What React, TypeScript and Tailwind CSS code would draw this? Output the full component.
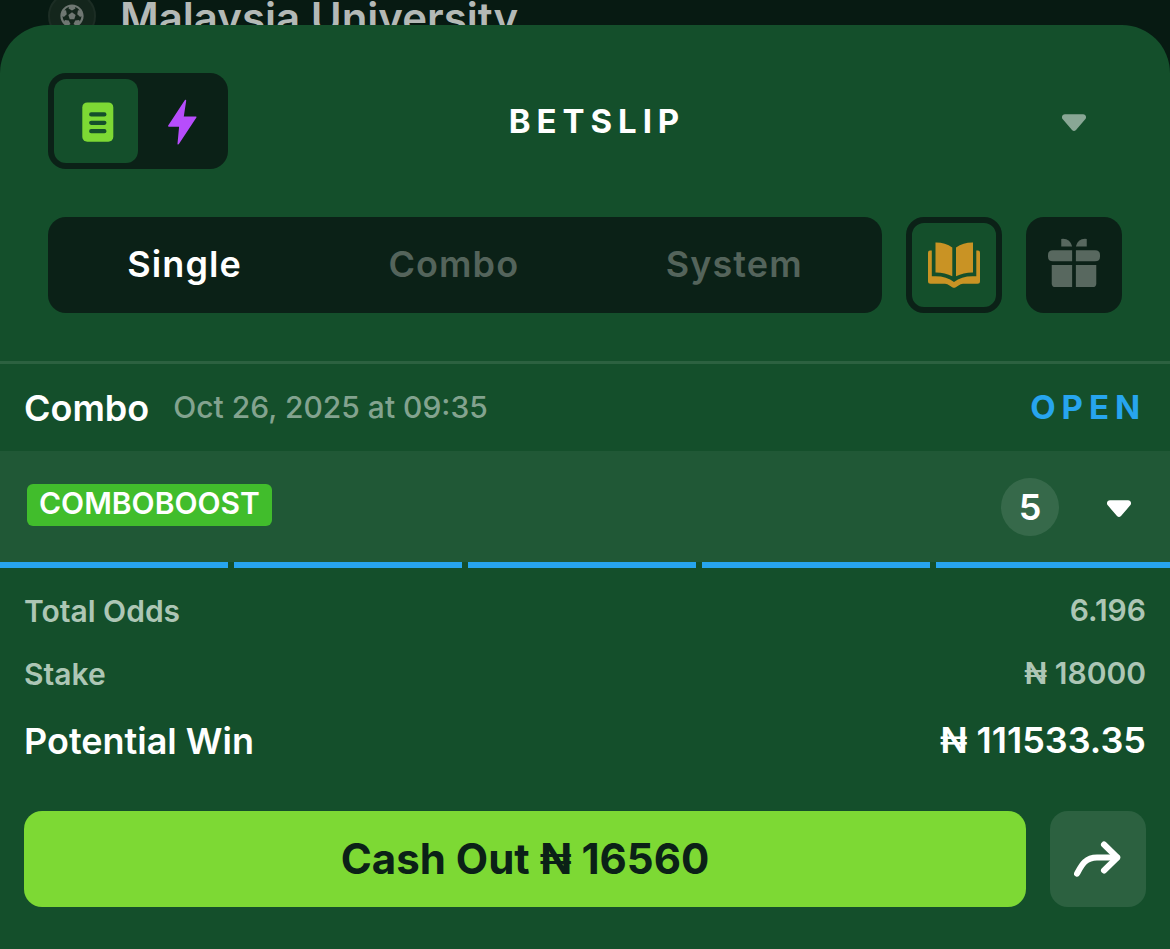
import { useState, type ReactNode } from "react";
import { FaFutbol } from "react-icons/fa";

function ListIcon() {
  return (
    <svg width="32" height="40" viewBox="0 0 32 40" aria-hidden="true">
      <rect x="0.3" y="0.4" width="31" height="39.4" rx="5" fill="#7dd934" />
      <path d="M9.2 12.4h13.2M9.2 20.8h13.2M9.2 29.2h13.2" stroke="#144f2b" strokeWidth="4.2" strokeLinecap="round" />
    </svg>
  );
}

function BoltIcon() {
  return (
    <svg width="30" height="46" viewBox="0 0 30 46" aria-hidden="true">
      <path
        d="M17.600 1.400 1.200 26.600c-.4.6 0 1.100.6 1.100h10.300l-1.600 17c-.1 1 .9 1.200 1.400.4L29.400 18.600c.4-.6 0-1.200-.6-1.200H16.800l2.400-15.600c.1-1-1.100-1.300-1.600-.4z"
        fill="#b74dfc"
      />
    </svg>
  );
}

function BookIcon() {
  return (
    <svg width="52" height="46" viewBox="0 0 52 46" fill="#c99324" aria-hidden="true">
      <path d="M7.500.6Q17 .4 24.300 5.600V34.200Q17 30.300 7.500 30.400z" />
      <path d="M45 .6Q35.500 .4 28 5.600V34.200Q35.500 30.300 45 30.400z" />
      <path d="M0 10.800Q0 8.600 2 8.600H3.800V34.300Q17.500 33.200 26 40Q34.500 33.200 48.300 34.300V8.600H50Q52 8.600 52 10.800V39.200Q52 41.700 49.500 41.700H35Q32.500 41.700 30.500 43.500L27.800 45.300Q26 46.300 24.200 45.300L21.500 43.500Q19.500 41.700 17 41.700H2.500Q0 41.700 0 39.200z" />
    </svg>
  );
}

function GiftIcon() {
  return (
    <svg width="52" height="50" viewBox="0 0 53 50" fill="#58685f" aria-hidden="true">
      <path d="M13.500.5Q22.500-.5 24.600 8.300H13.500z" />
      <path d="M39.500.5Q30.500-.5 28.400 8.300H39.500z" />
      <path d="M5 12H24.600V23.200H5Q0 23.200 0 18.600V16.600Q0 12 5 12z" />
      <path d="M28.400 12H48Q53 12 53 16.600V18.600Q53 23.200 48 23.200H28.400z" />
      <path d="M3.800 27H24.600V49.500H7.500Q3.800 49.500 3.800 45.800z" />
      <path d="M28.400 27H49.200V45.800Q49.200 49.500 45.500 49.500H28.400z" />
    </svg>
  );
}

function CaretIcon() {
  return (
    <svg width="24" height="18" viewBox="0 0 24 18" fill="currentColor" aria-hidden="true">
      <path d="M3 .3H21C24 .3 25 3.500 23 5.600L14 16Q12 18.200 10 16L1 5.600C-1 3.500 0 .3 3 .3z" />
    </svg>
  );
}

function ShareIcon() {
  return (
    <svg width="48" height="38" viewBox="0 0 48 38" fill="none" stroke="white" strokeWidth="6" strokeLinecap="round" strokeLinejoin="round" aria-hidden="true">
      <path d="M3 33.600C7.500 25.500 11 17.500 23 17.500H43" />
      <path d="M30 4.500 43.300 17.500 30 30.500" />
    </svg>
  );
}

function SummaryRow({ label, value, strong = false }: { label: string; value: ReactNode; strong?: boolean }) {
  return (
    <div
      className={
        strong
          ? "flex items-center justify-between text-4xl leading-[44px] font-semibold text-white"
          : "flex items-center justify-between text-3xl leading-9 font-semibold text-[#adc6b5]"
      }
    >
      <dt>{label}</dt>
      <dd className="pb-0.5">{value}</dd>
    </div>
  );
}

const betTypes = ["Single", "Combo", "System"];
const legs = [1, 2, 3, 4, 5];

export default function App() {
  const [betType, setBetType] = useState("Single");

  return (
    <div className="min-h-screen bg-[#071a12] font-['Inter',sans-serif]">
      <div className="flex h-[25px] items-start gap-6 overflow-hidden px-12">
        <div className="-mt-2 flex size-12 shrink-0 items-center justify-center rounded-full border-2 border-[#1c2d24] bg-[#14261c]">
          <FaFutbol className="size-6 text-[#6f7772]" />
        </div>
        <p className="-mt-2 text-[42px] leading-[52px] font-semibold whitespace-nowrap text-[#b4b9b6]">Malaysia University</p>
      </div>

      <main className="min-h-[calc(100vh-25px)] rounded-t-[48px] bg-[#144f2b] pt-12 text-white">
        <header className="px-12 pb-12">
          <div className="flex items-center">
            <div className="flex rounded-[18px] bg-[#0b2117] p-1.5">
              <button aria-label="Betslip" className="flex size-[84px] items-center justify-center rounded-xl bg-[#144f2b] pt-0.5 pl-1">
                <ListIcon />
              </button>
              <button aria-label="Quick bet" className="flex size-[84px] items-center justify-center rounded-xl pt-0.5 pl-1">
                <BoltIcon />
              </button>
            </div>
            <h1 className="flex-1 text-center text-[33px] leading-10 font-bold tracking-[0.18em]">BETSLIP</h1>
            <div className="flex w-[156px] justify-end">
              <button aria-label="Collapse" className="flex size-24 items-center justify-center pt-1 text-[#89a795]">
                <CaretIcon />
              </button>
            </div>
          </div>

          <div className="mt-12 flex gap-6">
            <div className="flex h-24 flex-1 rounded-[18px] bg-[#0b2117] p-1.5">
              {betTypes.map((type) => (
                <button
                  key={type}
                  onClick={() => setBetType(type)}
                  className={
                    type === betType
                      ? "flex-auto pb-0.5 text-4xl font-semibold tracking-[0.03em] text-white"
                      : "flex-auto pb-0.5 text-4xl font-semibold tracking-[0.03em] text-[#54645b]"
                  }
                >
                  {type}
                </button>
              ))}
            </div>
            <button aria-label="My bets" className="flex size-24 items-center justify-center rounded-[18px] border-6 border-[#0b2117]">
              <BookIcon />
            </button>
            <button aria-label="Bonuses" className="flex size-24 items-center justify-center rounded-[18px] bg-[#0b2117] pb-1">
              <GiftIcon />
            </button>
          </div>
        </header>

        <section className="border-t-3 border-white/10">
          <div className="flex h-[87px] items-center px-6">
            <h2 className="text-4xl font-semibold">Combo</h2>
            <time dateTime="2025-10-26T09:35" className="ml-6 flex-1 pb-0.5 text-3xl font-medium text-[#83a38f]">
              Oct 26, 2025 at 09:35
            </time>
            <span className="pb-0.5 text-[33px] leading-10 font-bold tracking-[0.18em] text-[#27a5ee]">OPEN</span>
          </div>

          <div className="flex h-[111px] items-center bg-white/5 pr-[39px] pl-[27px]">
            <span className="mb-1 rounded-md bg-[#41bd2c] px-3 pb-1 text-3xl leading-[38px] font-semibold">COMBOBOOST</span>
            <span className="mr-12 ml-auto flex size-[58px] items-center justify-center rounded-full bg-white/10 text-4xl font-semibold">5</span>
            <button aria-label="Show selections" className="flex h-12 w-6 items-center justify-center pt-1">
              <CaretIcon />
            </button>
          </div>

          <div className="grid grid-cols-5">
            {legs.map((leg) => (
              <div key={leg} className="pr-1.5 last:pr-0">
                <div className="h-1.5 bg-[#27a5ee]" />
              </div>
            ))}
          </div>

          <dl className="flex flex-col gap-[25px] px-6 pt-6">
            <SummaryRow label="Total Odds" value="6.196" />
            <SummaryRow label="Stake" value="₦ 18000" />
            <SummaryRow label="Potential Win" value="₦ 111533.35" strong />
          </dl>

          <div className="flex gap-6 px-6 pt-[47px] pb-6">
            <button className="h-24 flex-1 rounded-[18px] bg-[#7dd934] pb-0.5 text-[42px] font-bold text-[#0b2117]">Cash Out ₦ 16560</button>
            <button aria-label="Share" className="flex size-24 items-center justify-center rounded-[18px] bg-white/10">
              <ShareIcon />
            </button>
          </div>
        </section>
      </main>
    </div>
  );
}
